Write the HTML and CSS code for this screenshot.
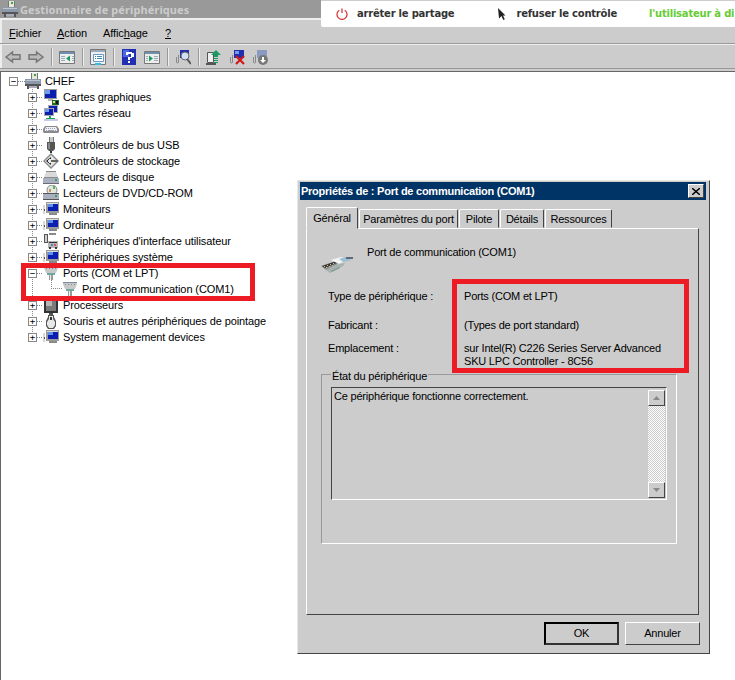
FILE: index.html
```html
<!DOCTYPE html>
<html lang="fr">
<head>
<meta charset="utf-8">
<title>Gestionnaire de périphériques</title>
<link rel="stylesheet" href="styles.css">
</head>
<body>
<svg class="defs" width="0" height="0" aria-hidden="true">
  <defs>
    <symbol id="i-pc" viewBox="0 0 16 16">
      <path fill="#9a9a9a" d="M3 1h13v11H3z"/>
      <path fill="#dcdcdc" d="M4 2h11v1H4z"/>
      <path fill="#0a1fb0" d="M5 3h10v7H5z"/>
      <path fill="#5f8fe8" d="M5 3h5v3H5z"/>
      <path fill="#8a8a8a" d="M6 12h8v2H6z"/>
      <path fill="#d8d8d8" d="M0 4h2v9H0z"/>
      <path fill="#555" d="M1 8h1v2H1z"/>
    </symbol>
    <symbol id="i-gfx" viewBox="0 0 16 16">
      <path fill="#9a9a9a" d="M1 0h13v10H1z"/>
      <path fill="#0a1fb0" d="M2 1h11v8H2z"/>
      <path fill="#6f9cf0" d="M2 1h5v4H2z"/>
      <path fill="#b5b5b5" d="M5 10h5v2H5z"/>
      <path fill="#1c6a35" d="M9 11h7v5H9z"/>
      <path fill="#e8e060" d="M10 12h2v2h-2z"/>
      <path fill="#111" d="M13 12h2v3h-2z"/>
    </symbol>
    <symbol id="i-net" viewBox="0 0 16 16">
      <path fill="#a8a8a8" d="M5 0h10v8H5z"/>
      <path fill="#0a1fb0" d="M6 1h8v6H6z"/>
      <path fill="#a8a8a8" d="M1 3h10v8H1z"/>
      <path fill="#0a1fb0" d="M2 4h8v6H2z"/>
      <path fill="#6f9cf0" d="M2 4h4v3H2z"/>
      <path fill="#12a05a" d="M6 11h2v2h4v1H3v-1h3z"/>
      <path fill="#c8c8e8" d="M1 14h14v2H1z"/>
    </symbol>
    <symbol id="i-kbd" viewBox="0 0 16 16">
      <path fill="#8a8a8a" d="M2 5h12l2 3v3l-1 1H1l-1-1V8z"/>
      <path fill="#f2f2f2" d="M3 6h10l1 2v2H2V8z"/>
      <path fill="#9aa0b8" d="M3 7h1v1H3zM5 7h1v1H5zM7 7h1v1H7zM9 7h1v1H9zM11 7h1v1h-1zM3 9h1v1H3zM5 9h6v1H5zM12 9h1v1h-1z"/>
    </symbol>
    <symbol id="i-usb" viewBox="0 0 16 16">
      <path fill="#c8c8c8" d="M6 0h5v5H6z"/>
      <path fill="#777" d="M6 0h1v5H6zM10 0h1v5h-1z"/>
      <path fill="#555" d="M4 5h8v7l-2 2H6l-2-2z"/>
      <path fill="#8a8a8a" d="M5 6h2v6H5z"/>
      <path fill="#333" d="M7 14h2v2H7z"/>
    </symbol>
    <symbol id="i-sto" viewBox="0 0 16 16">
      <path fill="#8a8a8a" d="M8 0l8 8-8 8-8-8z"/>
      <path fill="#e6e6e6" d="M8 2l6 6-6 6-6-6z"/>
      <path fill="#222" d="M8 4v2H6v1H5v2h1v1h2v2l-5-4z"/>
      <path fill="#666" d="M8 7h7v2H8z"/>
    </symbol>
    <symbol id="i-hdd" viewBox="0 0 16 16">
      <path fill="#d9d9d9" d="M3 3h10l2 5H1z"/>
      <path fill="#8a8a8a" d="M3 2h10v1H3zM1 8h14v1H1z"/>
      <path fill="#a9b0c0" d="M0 9h16v5H0z"/>
      <path fill="#3ca050" d="M12 10h2v2h-2z"/>
      <path fill="#6b6b7a" d="M0 14h16v1H0z"/>
    </symbol>
    <symbol id="i-dvd" viewBox="0 0 16 16">
      <circle cx="9" cy="5" r="5" fill="#dfe8df" stroke="#8a8a8a"/>
      <path fill="#60b060" d="M10 1h2v3h-2z"/>
      <path fill="#d09060" d="M6 4h2v3H6z"/>
      <path fill="#a9b0c0" d="M0 9h16v5H0z"/>
      <path fill="#555" d="M0 14h16v1H0zM0 8h16v1H0z"/>
      <path fill="#3ca050" d="M12 10h2v2h-2z"/>
    </symbol>
    <symbol id="i-hid" viewBox="0 0 16 16">
      <path fill="#555" d="M1 1h4v9H1z"/>
      <path fill="#d0d0d0" d="M2 2h2v7H2z"/>
      <path fill="#8a8a8a" d="M6 0h7v2H6z"/>
      <path fill="#b5b5b5" d="M5 8h10v7H5z"/>
      <path fill="#333" d="M6 9h8v1H6zM6 14h2v2H6zM12 14h2v2h-2z"/>
      <path fill="#5a7fd0" d="M8 11h2v2H8z"/>
      <path fill="#d06060" d="M11 11h2v2h-2z"/>
    </symbol>
    <symbol id="i-port" viewBox="0 0 16 16">
      <path fill="#c8c8c8" d="M1 1h14v2l-2 5H3L1 3z"/>
      <path fill="#7c8c9c" d="M1 1h14v1H1zM3 3h1v1H3zM6 3h1v1H6zM9 3h1v1H9zM12 3h1v1h-1z"/>
      <path fill="#6ea8a0" d="M4 8h8v2H4z"/>
      <path fill="#9a9a9a" d="M6 10h4v5H6z"/>
      <path fill="#eee" d="M7 10h1v5H7z"/>
    </symbol>
    <symbol id="i-cpu" viewBox="0 0 16 16">
      <path fill="#333" d="M1 2h14v14H1z"/>
      <path fill="#7a7a7a" d="M3 4h10v10H3z"/>
      <path fill="#b5b5b5" d="M3 4h6v5H3z"/>
    </symbol>
    <symbol id="i-mouse" viewBox="0 0 16 16">
      <path fill="#555" d="M6 0h4v2H6zM5 2h6v2l2 4v5l-2 3H5l-2-3V8l2-4z"/>
      <path fill="#e8e8e8" d="M6 3h4v3l2 3v3l-2 3H6l-2-3V9l2-3z"/>
      <path fill="#333" d="M7 4h2v3H7z"/>
    </symbol>
    <symbol id="i-host" viewBox="0 0 16 16">
      <path fill="#e8e8d8" d="M6 0h7v6H6z"/>
      <path fill="#3ca050" d="M9 1h2v2H9z"/>
      <path fill="#777" d="M6 0h1v6H6zM12 0h1v6h-1z"/>
      <path fill="#8d99aa" d="M0 6h16v5H0z"/>
      <path fill="#bcc4d0" d="M1 7h14v1H1z"/>
      <path fill="#555" d="M0 11h16v2H0zM2 13h2v3H2zM12 13h2v3h-2z"/>
      <path fill="#aab" d="M4 13h8v2H4z"/>
    </symbol>
  </defs>
</svg>

<div class="manager">
  <header class="caption">
    <svg class="ico16"><use href="#i-host"/></svg>
    <span>Gestionnaire de périphériques</span>
  </header>
  <nav class="menubar">
    <span class="m1"><u>F</u>ichier</span>
    <span class="m2"><u>A</u>ction</span>
    <span class="m3">Affic<u>h</u>age</span>
    <span class="m4"><u>?</u></span>
  </nav>
  <div class="toolbar">
    <svg class="tool" viewBox="0 0 16 16"><path fill="#bbb" stroke="#777" stroke-width="1.500" d="M1 8L7.500 3v2.800H15v4.400H7.500V13z"/></svg>
    <svg class="tool" viewBox="0 0 16 16"><path fill="#bbb" stroke="#777" stroke-width="1.500" d="M15 8L8.500 3v2.800H1v4.400h7.500V13z"/></svg>
    <i class="sep"></i>
    <svg class="tool" viewBox="0 0 16 16"><path fill="#eee" stroke="#777" d="M.5 2.500h15v12H.5z"/><path fill="#6f8fb0" d="M1 3h14v2H1z"/><path fill="#9ab" d="M2 7h4v1H2zM2 9h4v1H2zM2 11h4v1H2zM13 7h2v1h-2zM13 9h2v1h-2zM13 11h2v1h-2z"/><path fill="#1a9a60" d="M11 6.500v6L7 9.500z"/></svg>
    <i class="sep"></i>
    <svg class="tool" viewBox="0 0 16 16"><path fill="#eee" stroke="#777" d="M.5 .5h15v15H.5z"/><path fill="#9ab" d="M1 1h14v2H1z"/><path fill="#fff" stroke="#69c" d="M3.500 5.500h10v7h-10z"/><path fill="#48a" d="M5 7h1v1H5zM7 7h5v1H7zM5 9h1v1H5zM7 9h5v1H7z"/><path fill="#3bd" d="M5 14h6v2H5z"/></svg>
    <i class="sep"></i>
    <svg class="tool" viewBox="0 0 16 16"><path fill="#2030b0" d="M1 0h14v16H1z"/><path fill="#4a68e0" d="M2 1h6v7H2z"/><path fill="#fff" d="M5 3h6v1h2v4h-2v1H9v2H7V8h3V5H7v1H5zM7 12h2v2H7z"/></svg>
    <svg class="tool" viewBox="0 0 16 16"><path fill="#eee" stroke="#777" d="M.5 2.500h15v12H.5z"/><path fill="#6f8fb0" d="M1 3h14v2H1z"/><path fill="#9ab" d="M10 7h4v1h-4zM10 9h4v1h-4zM10 11h4v1h-4zM2 7h2v1H2zM2 9h2v1H2zM2 11h2v1H2z"/><path fill="#1a9a60" d="M5 6.500v6L9 9.500z"/></svg>
    <i class="sep"></i>
    <svg class="tool" viewBox="0 0 16 16"><path fill="none" stroke="#888" d="M1.500 8v5a1 1 0 0 0 2 0V6"/><path fill="#1f2fb0" d="M5 1h9v8H5z"/><circle cx="10" cy="7" r="4" fill="#cfe0f5" stroke="#666"/><path stroke="#555" stroke-width="2" d="M12 10l4 5"/></svg>
    <i class="sep"></i>
    <svg class="tool" viewBox="0 0 16 16"><path fill="#eee" stroke="#555" d="M1.500 3.500h6v10h-6z"/><path fill="#555" d="M0 14h10v2H0z"/><path fill="#1a9a60" d="M10 1l5 5h-3v2h-4V6H5z"/><path fill="#1a9a60" d="M8 9h4v1H8zM8 11h4v1H8zM8 13h4v1H8z"/></svg>
    <svg class="tool" viewBox="0 0 16 16"><path fill="none" stroke="#888" d="M1.500 8v5a1 1 0 0 0 2 0V6"/><path fill="#1f2fb0" d="M5 1h10v8H5z"/><path fill="#6f9cf0" d="M6 2h4v3H6z"/><path stroke="#d01818" stroke-width="2.200" d="M7 7l8 8M15 7l-8 8"/></svg>
    <svg class="tool" viewBox="0 0 16 16"><path fill="none" stroke="#888" d="M1.500 8v5a1 1 0 0 0 2 0V6"/><path fill="#8a9ac0" d="M5 1h10v8H5z"/><circle cx="11" cy="11" r="5" fill="#777"/><path fill="#fff" d="M10 8h2v3h2l-3 3-3-3h2z"/></svg>
  </div>
  <div class="tree">
    <div class="row root">
      <span class="box">−</span><i class="dash"></i>
      <svg class="ico16"><use href="#i-host"/></svg><span class="lab">CHEF</span>
    </div>
    <div class="branch">
      <div class="row"><span class="box">+</span><i class="dash"></i><svg class="ico16"><use href="#i-gfx"/></svg><span class="lab">Cartes graphiques</span></div>
      <div class="row"><span class="box">+</span><i class="dash"></i><svg class="ico16"><use href="#i-net"/></svg><span class="lab">Cartes réseau</span></div>
      <div class="row"><span class="box">+</span><i class="dash"></i><svg class="ico16"><use href="#i-kbd"/></svg><span class="lab">Claviers</span></div>
      <div class="row"><span class="box">+</span><i class="dash"></i><svg class="ico16"><use href="#i-usb"/></svg><span class="lab">Contrôleurs de bus USB</span></div>
      <div class="row"><span class="box">+</span><i class="dash"></i><svg class="ico16"><use href="#i-sto"/></svg><span class="lab">Contrôleurs de stockage</span></div>
      <div class="row"><span class="box">+</span><i class="dash"></i><svg class="ico16"><use href="#i-hdd"/></svg><span class="lab">Lecteurs de disque</span></div>
      <div class="row"><span class="box">+</span><i class="dash"></i><svg class="ico16"><use href="#i-dvd"/></svg><span class="lab">Lecteurs de DVD/CD-ROM</span></div>
      <div class="row"><span class="box">+</span><i class="dash"></i><svg class="ico16"><use href="#i-pc"/></svg><span class="lab">Moniteurs</span></div>
      <div class="row"><span class="box">+</span><i class="dash"></i><svg class="ico16"><use href="#i-pc"/></svg><span class="lab">Ordinateur</span></div>
      <div class="row"><span class="box">+</span><i class="dash"></i><svg class="ico16"><use href="#i-hid"/></svg><span class="lab">Périphériques d'interface utilisateur</span></div>
      <div class="row"><span class="box">+</span><i class="dash"></i><svg class="ico16"><use href="#i-pc"/></svg><span class="lab">Périphériques système</span></div>
      <div class="row"><span class="box">−</span><i class="dash"></i><svg class="ico16"><use href="#i-port"/></svg><span class="lab">Ports (COM et LPT)</span></div>
      <div class="row leaf"><i class="elbow"></i><svg class="ico16"><use href="#i-port"/></svg><span class="lab">Port de communication (COM1)</span></div>
      <div class="row"><span class="box">+</span><i class="dash"></i><svg class="ico16"><use href="#i-cpu"/></svg><span class="lab">Processeurs</span></div>
      <div class="row"><span class="box">+</span><i class="dash"></i><svg class="ico16"><use href="#i-mouse"/></svg><span class="lab">Souris et autres périphériques de pointage</span></div>
      <div class="row"><span class="box">+</span><i class="dash"></i><svg class="ico16"><use href="#i-pc"/></svg><span class="lab">System management devices</span></div>
    </div>
  </div>
</div>

<div class="mark mark-tree"></div>

<aside class="sharebar">
  <svg class="power" viewBox="0 0 12 12"><path fill="none" stroke="#d63a3a" stroke-width="1.300" d="M3.300 2.200a5 5 0 1 0 5.400 0M6 .5v4.500"/></svg>
  <span class="act">arrêter le partage</span>
  <svg class="pointer" viewBox="0 0 8 12"><path fill="#222" d="M0 0l7.500 7.500H5l1.800 3.800-1.500.7L3.500 8 1 10.500z"/></svg>
  <span class="act">refuser le contrôle</span>
  <span class="note">l'utilisateur à di</span>
</aside>

<section class="dialog">
  <header class="dlg-title">
    <span>Propriétés de : Port de communication (COM1)</span>
    <span class="close"><svg viewBox="0 0 8 7"><path fill="none" stroke="#000" stroke-width="1.400" d="M0 0l8 7M8 0L0 7"/></svg></span>
  </header>
  <div class="tabs">
    <span class="tab active">Général</span>
    <span class="tab t-params">Paramètres du port</span>
    <span class="tab t-driver">Pilote</span>
    <span class="tab t-details">Détails</span>
    <span class="tab t-res">Ressources</span>
  </div>
  <div class="panel">
    <div class="head">
      <svg class="dev" viewBox="0 0 32 18">
        <path fill="#8a8f94" d="M0 10l20-7 3 2-18 9z"/>
        <path fill="#3a3a3a" d="M1 10l15-5 2 1L4 12z"/>
        <path fill="#d8c070" d="M3 10h1v1H3zM6 9h1v1H6zM9 8h1v1H9zM12 7h1v1h-1zM5 11h1v1H5zM8 10h1v1H8zM11 9h1v1h-1z"/>
        <path fill="#f4f6f6" d="M10 4l10-3 7 2-9 5z"/>
        <path fill="#9fc0d0" d="M18 3l6-2 7 1-3 3-6 1z"/>
        <path fill="#5a6a78" d="M25 1h7v2h-7z"/>
        <path fill="#a8b0b0" d="M5 14l13-6 6-1-2 3-13 7z"/>
        <path fill="#7f9f88" d="M10 15l8-4 1 1-8 4z"/>
      </svg>
      <span>Port de communication (COM1)</span>
    </div>
    <dl class="facts">
      <dt class="f1">Type de périphérique :</dt><dd class="f1">Ports (COM et LPT)</dd>
      <dt class="f2">Fabricant :</dt><dd class="f2">(Types de port standard)</dd>
      <dt class="f3">Emplacement :</dt><dd class="f3">sur Intel(R) C226 Series Server Advanced<br>SKU LPC Controller - 8C56</dd>
    </dl>
    <div class="status">
      <span class="legend">État du périphérique</span>
      <div class="memo">
        <p>Ce périphérique fonctionne correctement.</p>
        <div class="scroll">
          <span class="sbtn"><svg viewBox="0 0 7 4"><path fill="#8a8a8a" d="M3.500 0L7 4H0z"/></svg></span>
          <span class="track"></span>
          <span class="sbtn"><svg viewBox="0 0 7 4"><path fill="#8a8a8a" d="M0 0h7L3.500 4z"/></svg></span>
        </div>
      </div>
    </div>
  </div>
  <footer class="actions">
    <span class="btn default">OK</span>
    <span class="btn">Annuler</span>
  </footer>
  <div class="mark mark-facts"></div>
</section>
</body>
</html>
```
FILE: styles.css
```css
* { box-sizing: border-box; }
html, body { margin: 0; height: 100%; }
body {
  width: 735px;
  height: 680px;
  overflow: hidden;
  position: relative;
  background: #fff;
  font: 11px/16px "Liberation Sans", sans-serif;
  letter-spacing: -.1px;
  color: #000;
}
.defs { position: absolute; }
.ico16 { width: 16px; height: 16px; flex: none; display: block; }

/* Main console window */
.manager { height: 680px; display: flex; flex-direction: column; background: #ccc; }
.caption {
  height: 18px;
  flex: none;
  background: #999;
  color: #ccc;
  font: bold 11px/17px "Noto Sans", sans-serif;
  letter-spacing: .1px;
  display: flex;
  align-items: center;
  gap: 2px;
  padding-left: 2px;
  white-space: nowrap;
}
.menubar {
  height: 26px;
  flex: none;
  background: #ccc;
  border-top: 2px solid #eee;
  border-bottom: 1px solid #999;
  box-shadow: inset 2px 0 #eee;
  display: flex;
  align-items: center;
  padding: 2px 0 0 9px;
}
.m1 { width: 48px; }
.m2 { width: 46px; }
.m3 { width: 62px; }
.toolbar {
  height: 25px;
  flex: none;
  background: #ccc;
  border-top: 1px solid #eee;
  border-bottom: 1px solid #999;
  box-shadow: inset 2px 0 #eee;
  display: flex;
  align-items: center;
  padding-left: 5px;
}
.tool { width: 16px; height: 16px; flex: none; margin-right: 7px; }
.sep {
  width: 2px;
  height: 18px;
  flex: none;
  background: linear-gradient(90deg, #999 50%, #eee 50%);
  margin: 0 6px 0 0;
}

/* Device tree */
.tree {
  flex: 1;
  margin-top: 2px;
  background: #fff;
  padding: 1px 0 0 1px;
  border-top: 1px solid #666;
  border-left: 1px solid #666;
}
.row { height: 16px; display: flex; align-items: center; position: relative; white-space: nowrap; }
.root { padding-left: 7px; }
.branch {
  padding-left: 26px;
  background: repeating-linear-gradient(#888 0 1px, transparent 1px 2px) 30px 0 / 1px 248px no-repeat;
}
.box {
  width: 9px;
  height: 9px;
  flex: none;
  background: #fff;
  border: 1px solid #888;
  font: 9px/7px "DejaVu Sans Mono", monospace;
  letter-spacing: 0;
  text-align: center;
  color: #000;
  position: relative;
}
.dash { width: 5px; flex: none; margin-right: 1px; border-top: 1px dotted #888; }
.root .dash { width: 7px; margin-right: 0; }
.lab { padding-left: 4px; }
.leaf { padding-left: 34px; }
.elbow {
  position: absolute;
  left: 23px;
  top: -1px;
  width: 11px;
  height: 9px;
  border-left: 1px dotted #888;
  border-bottom: 1px dotted #888;
}

/* Red annotation frames */
.mark { position: absolute; border: 5px solid #ed1c24; }
.mark-tree { left: 21px; top: 263px; width: 234px; height: 38px; }
.mark-facts { left: 154px; top: 98px; width: 237px; height: 94px; }

/* Screen-sharing strip */
.sharebar {
  position: absolute;
  left: 321px;
  top: 0;
  width: 414px;
  height: 27px;
  background: #fff;
  border-top: 1px solid #ccc;
  border-bottom-left-radius: 2px;
  display: flex;
  align-items: center;
  font: bold 10px/14px "DejaVu Sans", sans-serif;
  letter-spacing: -.22px;
  white-space: nowrap;
  overflow: hidden;
  color: #333;
}
.power { width: 12px; height: 12px; flex: none; margin-left: 15px; }
.act { margin-left: 9px; }
.pointer { width: 8px; height: 12px; flex: none; margin-left: 44px; }
.act + .pointer + .act { margin-left: 10px; }
.note { color: #66cc33; margin-left: 32px; }

/* Properties dialog */
.dialog {
  position: absolute;
  left: 297px;
  top: 180px;
  width: 413px;
  height: 474px;
  background: #ccc;
  border: 1px solid;
  border-color: #e8e8e8 #444 #444 #e8e8e8;
  padding: 1px 3px 0 2px;
  display: flex;
  flex-direction: column;
  letter-spacing: -.2px;
}
.dlg-title {
  height: 18px;
  flex: none;
  background: #036;
  color: #fff;
  font: bold 11px/18px "Liberation Sans", sans-serif;
  letter-spacing: -.25px;
  display: flex;
  justify-content: space-between;
  align-items: center;
  padding: 0 2px 0 1px;
  white-space: nowrap;
}
.close {
  width: 16px;
  height: 14px;
  background: #ccc;
  border: 1px solid;
  border-color: #fff #444 #444 #fff;
  display: flex;
  align-items: center;
  justify-content: center;
}
.close svg { width: 8px; height: 7px; display: block; }
.tabs { height: 28px; flex: none; display: flex; align-items: flex-end; padding-left: 6px; position: relative; z-index: 1; }
.tab {
  height: 19px;
  margin-right: 1px;
  border: 1px solid;
  border-color: #fff #444 #ccc #fff;
  border-radius: 2px 2px 0 0;
  padding: 1px 0 0;
  text-align: center;
  background: #ccc;
  white-space: nowrap;
}
.tab.active { height: 22px; width: 52px; padding-top: 2px; margin-bottom: -1px; position: relative; }
.t-params { width: 99px; }
.t-driver { width: 40px; }
.t-details { width: 44px; }
.t-res { width: 67px; }
.panel {
  height: 387px;
  flex: none;
  margin: 0 7px 0 6px;
  background: #ccc;
  border: 1px solid;
  border-color: #fff #444 #444 #fff;
  padding-top: 15px;
}
.head { display: flex; align-items: flex-start; height: 38px; padding-left: 14px; }
.dev { width: 32px; height: 18px; margin-top: 12px; flex: none; }
.head span { margin-left: 14px; }
.facts { margin: 8px 0 0; padding: 0 0 0 21px; display: grid; grid-template-columns: 136px 1fr; grid-template-rows: 29px 23px 26px; }
.facts dt, .facts dd { margin: 0; line-height: 13px; }
.status {
  position: relative;
  margin: 6px 21px 0 14px;
  height: 170px;
  border: 1px solid;
  border-color: #999 #fff #fff #999;
  padding: 12px 9px 0;
}
.legend { position: absolute; left: 9px; top: -5px; background: #ccc; padding: 0 1px; line-height: 12px; }
.memo {
  height: 113px;
  display: flex;
  justify-content: space-between;
  border: 1px solid;
  border-color: #444 #fff #fff #444;
  padding: 1px 1px 1px 2px;
}
.memo p { margin: 0; line-height: 15px; }
.scroll { width: 17px; display: flex; flex-direction: column; margin-top: 1px; }
.sbtn {
  height: 16px;
  flex: none;
  background: #ccc;
  border: 1px solid;
  border-color: #fff #444 #444 #fff;
  display: flex;
  align-items: center;
  justify-content: center;
}
.sbtn svg { width: 7px; height: 4px; }
.track { flex: 1; background: repeating-conic-gradient(#fff 0 25%, #ccc 0 50%) 0 0 / 2px 2px; }
.actions { display: flex; justify-content: flex-end; gap: 6px; padding: 7px 6px 0 0; }
.btn {
  width: 75px;
  height: 23px;
  border: 1px solid;
  border-color: #fff #444 #444 #fff;
  text-align: center;
  line-height: 20px;
  background: #ccc;
}
.btn.default { border: 2px solid; border-color: #000 #333 #333 #000; line-height: 19px; }
```
